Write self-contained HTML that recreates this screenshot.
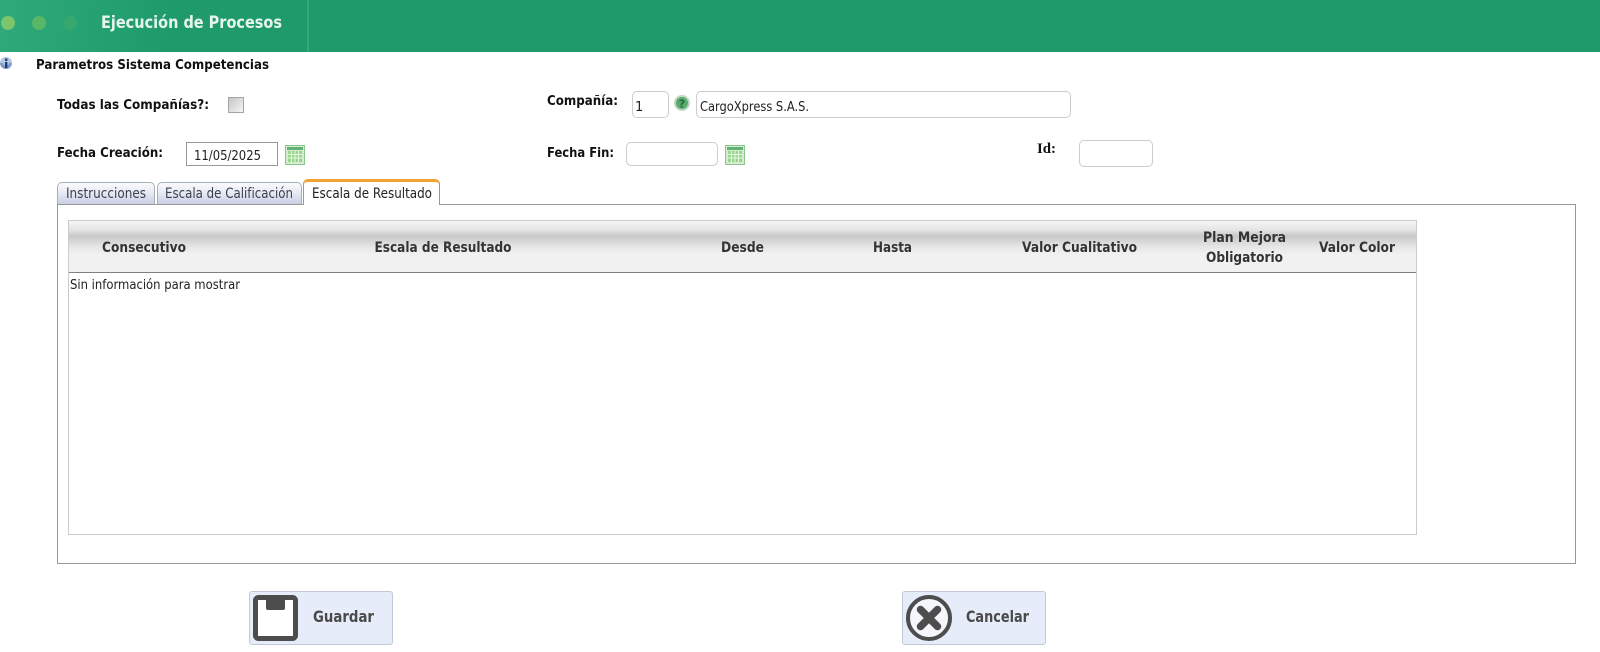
<!DOCTYPE html>
<html lang="es">
<head>
<meta charset="utf-8">
<title>Ejecución de Procesos</title>
<style>
html,body{margin:0;padding:0;background:#fff;width:1600px;height:652px;overflow:hidden}
.a{position:absolute;box-sizing:border-box}
#hdr{left:0;top:0;width:1600px;height:52px;background:linear-gradient(100deg,#2fa97a 0,#1f9b6b 170px,#1f9b6b 100%)}
#div{left:307px;top:0;width:2px;height:52px;background:#35a87c}
.dot{border-radius:50%;width:14px;height:14px;top:16px}
.inp{background:#fff;border:1px solid #ccc;border-radius:5px}
#panel{left:57px;top:204px;width:1519px;height:360px;border:1px solid #999;background:#fff}
#tbl{left:68px;top:220px;width:1349px;height:315px;border:1px solid #ccc;background:#fff}
#th{left:69px;top:221px;width:1347px;height:52px;border-bottom:1px solid #808080;background:linear-gradient(#f6f6f6 0,#e4e4e4 9px,#c8c8c8 15px,#e4e4e4 25px,#f1f1f1 33px,#f1f1f1 100%)}
.tab{top:182px;height:23px;border:1px solid #a3b2b8;border-bottom:1px solid #999;border-radius:5px 5px 0 0;background:linear-gradient(#fbfbfd,#e8eaf4 45%,#c9cee4)}
#act{left:303px;top:179px;width:137px;height:26px;background:#fff;border:1px solid #999;border-top:3px solid #f0a232;border-bottom:0;border-radius:5px 5px 0 0}
.btn{top:591px;height:54px;width:144px;background:#e6ecf9;border:1px solid #c2c8d4;border-radius:3px}
svg{position:absolute;left:0;top:0}
.b{font-family:"DejaVu Sans",sans-serif;font-weight:700;font-size:13px;fill:#111}
.h{font-family:"DejaVu Sans",sans-serif;font-weight:700;font-size:14px;fill:#333}
.r{font-family:"DejaVu Sans",sans-serif;font-size:13px;fill:#222}
.t{font-family:"DejaVu Sans",sans-serif;font-size:14px;fill:#3c4050}
.g{font-family:"DejaVu Sans",sans-serif;font-weight:700;font-size:16px;fill:#4a4a4a}
</style>
</head>
<body>
<div class="a" id="hdr"></div>
<div class="a" id="div"></div>
<div class="a dot" style="left:1px;background:#7cc56c"></div>
<div class="a dot" style="left:32px;background:#58b766"></div>
<div class="a dot" style="left:63px;background:#37a86d"></div>

<div class="a" id="panel"></div>
<div class="a tab" style="left:57px;width:98px"></div>
<div class="a tab" style="left:157px;width:145px"></div>
<div class="a" id="act"></div>
<div class="a" id="tbl"></div>
<div class="a" id="th"></div>

<div class="a inp" style="left:632px;top:91px;width:37px;height:27px"></div>
<div class="a inp" style="left:696px;top:91px;width:375px;height:27px"></div>
<div class="a" style="left:186px;top:142px;width:92px;height:24px;border:1px solid #999;background:#fff"></div>
<div class="a inp" style="left:626px;top:142px;width:92px;height:24px"></div>
<div class="a inp" style="left:1079px;top:140px;width:74px;height:27px"></div>
<div class="a" style="left:228px;top:97px;width:16px;height:16px;border:1px solid #a5a5a5;background:linear-gradient(135deg,#c4c4c4,#f6f6f6)"></div>

<div class="a btn" style="left:249px"></div>
<div class="a btn" style="left:902px"></div>

<svg width="1600" height="652" viewBox="0 0 1600 652" xmlns="http://www.w3.org/2000/svg">
  <text x="101" y="28" textLength="181" lengthAdjust="spacingAndGlyphs" font-family="DejaVu Sans, sans-serif" font-weight="700" font-size="17" fill="#e6f5ee">Ejecución de Procesos</text>

  <!-- info icon -->
  <circle cx="6" cy="63" r="6" fill="#b4c6e4"/>
  <path d="M0 63a6 6 0 0 0 12 0l-3 0a3 3 0 0 1-6 0z" fill="#7f9cc8"/>
  <rect x="5" y="62" width="2.400" height="6" fill="#1d3a78"/>
  <rect x="5" y="58.500" width="2.400" height="2.300" fill="#1d3a78"/>

  <text class="b" x="36" y="69" textLength="233" lengthAdjust="spacingAndGlyphs">Parametros Sistema Competencias</text>
  <text class="b" x="57" y="109" textLength="152" lengthAdjust="spacingAndGlyphs">Todas las Compañías?:</text>
  <text class="b" x="547" y="105" textLength="71" lengthAdjust="spacingAndGlyphs">Compañía:</text>
  <text class="b" x="57" y="157" textLength="106" lengthAdjust="spacingAndGlyphs">Fecha Creación:</text>
  <text class="b" x="547" y="157" textLength="67" lengthAdjust="spacingAndGlyphs">Fecha Fin:</text>
  <text x="1037" y="153" textLength="19" lengthAdjust="spacingAndGlyphs" font-family="Liberation Serif, serif" font-weight="700" font-size="15" fill="#111">Id:</text>

  <text class="r" x="635" y="111">1</text>
  <text class="r" x="700" y="111" textLength="109" lengthAdjust="spacingAndGlyphs">CargoXpress S.A.S.</text>
  <text class="r" x="194" y="160" textLength="67" lengthAdjust="spacingAndGlyphs">11/05/2025</text>

  <!-- help icon -->
  <circle cx="682" cy="103" r="8" fill="#bcd9bf"/>
  <circle cx="682" cy="103" r="6" fill="#5aa96f"/>
  <text x="682" y="107.500" text-anchor="middle" font-family="DejaVu Sans, sans-serif" font-weight="700" font-size="11" fill="#1f6b38">?</text>

  <!-- calendars -->
  <g>
    <rect x="285.500" y="145.500" width="19" height="19" fill="#d6ecd0" stroke="#8cc48e"/>
    <rect x="287" y="147" width="16" height="3" fill="#62b275"/>
    <path d="M288 151h14v11h-14z" fill="#98d58c"/>
    <path d="M288 154.500h14M288 158h14M291.500 151v11M295 151v11M298.500 151v11" stroke="#eaf7e5" stroke-width="1" fill="none"/>
  </g>
  <g transform="translate(440,0)">
    <rect x="285.500" y="145.500" width="19" height="19" fill="#d6ecd0" stroke="#8cc48e"/>
    <rect x="287" y="147" width="16" height="3" fill="#62b275"/>
    <path d="M288 151h14v11h-14z" fill="#98d58c"/>
    <path d="M288 154.500h14M288 158h14M291.500 151v11M295 151v11M298.500 151v11" stroke="#eaf7e5" stroke-width="1" fill="none"/>
  </g>

  <text class="t" x="66" y="198" textLength="80" lengthAdjust="spacingAndGlyphs">Instrucciones</text>
  <text class="t" x="165" y="198" textLength="128" lengthAdjust="spacingAndGlyphs">Escala de Calificación</text>
  <text class="t" x="312" y="198" textLength="120" lengthAdjust="spacingAndGlyphs" style="fill:#222">Escala de Resultado</text>

  <text class="h" x="102" y="252" textLength="84" lengthAdjust="spacingAndGlyphs">Consecutivo</text>
  <text class="h" x="374.500" y="252" textLength="137" lengthAdjust="spacingAndGlyphs">Escala de Resultado</text>
  <text class="h" x="721" y="252" textLength="43" lengthAdjust="spacingAndGlyphs">Desde</text>
  <text class="h" x="873" y="252" textLength="39" lengthAdjust="spacingAndGlyphs">Hasta</text>
  <text class="h" x="1022" y="252" textLength="115" lengthAdjust="spacingAndGlyphs">Valor Cualitativo</text>
  <text class="h" x="1203" y="242" textLength="83" lengthAdjust="spacingAndGlyphs">Plan Mejora</text>
  <text class="h" x="1206" y="262" textLength="77" lengthAdjust="spacingAndGlyphs">Obligatorio</text>
  <text class="h" x="1319" y="252" textLength="76" lengthAdjust="spacingAndGlyphs">Valor Color</text>

  <text class="r" x="70" y="289" textLength="170" lengthAdjust="spacingAndGlyphs">Sin información para mostrar</text>

  <!-- save icon -->
  <rect x="255.500" y="597.500" width="40" height="41" rx="3" fill="#fff" stroke="#4d4d4d" stroke-width="5"/>
  <path d="M266 596h19v12a2 2 0 0 1-2 2h-15a2 2 0 0 1-2-2z" fill="#4d4d4d"/>
  <text class="g" x="313" y="622" textLength="61" lengthAdjust="spacingAndGlyphs">Guardar</text>

  <!-- cancel icon -->
  <circle cx="929" cy="618" r="21" fill="#f4f6fb" stroke="#4d4d4d" stroke-width="4"/>
  <path d="M920.500 609.500L937.500 626.500M937.500 609.500L920.500 626.500" stroke="#4d4d4d" stroke-width="7.500" stroke-linecap="round"/>
  <text class="g" x="966" y="622" textLength="63" lengthAdjust="spacingAndGlyphs">Cancelar</text>
</svg>
</body>
</html>
